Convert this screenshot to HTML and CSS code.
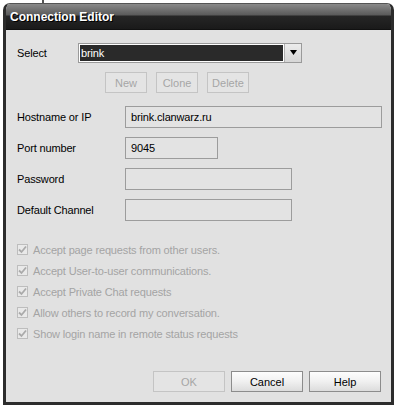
FILE: index.html
```html
<!DOCTYPE html>
<html>
<head>
    <meta charset="utf-8">
    <title>Connection Editor</title>
    <link rel="stylesheet" href="styles.css">
</head>
<body>
    <div class="backdrop-line"></div>
    <div class="window">
        <div class="titlebar">Connection Editor</div>
        <div class="content">
            <div class="select-row">
                <span class="label select-label">Select</span>
                <div class="combo">
                    <span class="combo-value"><span class="combo-sel">brink</span></span>
                    <span class="combo-btn">
                        <svg width="9" height="6" viewBox="0 0 9 6"><path d="M1 0h7L4.5 5z" fill="#000"/></svg>
                    </span>
                </div>
            </div>
            <div class="actions">
                <button class="btn disabled">New</button>
                <button class="btn disabled">Clone</button>
                <button class="btn disabled">Delete</button>
            </div>
            <div class="fields">
                <span class="label">Hostname or IP</span>
                <div class="field wide">brink.clanwarz.ru</div>
                <span class="label">Port number</span>
                <div class="field short">9045</div>
                <span class="label">Password</span>
                <div class="field medium"></div>
                <span class="label">Default Channel</span>
                <div class="field medium"></div>
            </div>
            <div class="checks">
                <div class="check"><span class="box"><svg width="9" height="9" viewBox="0 0 9 9"><path d="M1 4.5l2.5 2.5L8 1.5" fill="none" stroke="#aaa" stroke-width="1.8"/></svg></span>Accept page requests from other users.</div>
                <div class="check"><span class="box"><svg width="9" height="9" viewBox="0 0 9 9"><path d="M1 4.5l2.5 2.5L8 1.5" fill="none" stroke="#aaa" stroke-width="1.8"/></svg></span>Accept User-to-user communications.</div>
                <div class="check"><span class="box"><svg width="9" height="9" viewBox="0 0 9 9"><path d="M1 4.5l2.5 2.5L8 1.5" fill="none" stroke="#aaa" stroke-width="1.8"/></svg></span>Accept Private Chat requests</div>
                <div class="check"><span class="box"><svg width="9" height="9" viewBox="0 0 9 9"><path d="M1 4.5l2.5 2.5L8 1.5" fill="none" stroke="#aaa" stroke-width="1.8"/></svg></span>Allow others to record my conversation.</div>
                <div class="check"><span class="box"><svg width="9" height="9" viewBox="0 0 9 9"><path d="M1 4.5l2.5 2.5L8 1.5" fill="none" stroke="#aaa" stroke-width="1.8"/></svg></span>Show login name in remote status requests</div>
            </div>
            <div class="footer">
                <button class="btn big disabled">OK</button>
                <button class="btn big">Cancel</button>
                <button class="btn big">Help</button>
            </div>
        </div>
    </div>
</body>
</html>
```

FILE: styles.css
```css
body {
    margin: 0;
    background: #fff;
    font-family: "Liberation Sans", Arial, sans-serif;
    font-size: 11px;
    letter-spacing: -0.15px;
    color: #000;
    position: relative;
    height: 408px;
    overflow: hidden;
}
.backdrop-line {
    position: absolute;
    left: 42px;
    top: 0;
    width: 2px;
    height: 4px;
    background: #555;
}
.window {
    box-sizing: border-box;
    width: 391px;
    height: 402px;
    margin: 3px 0 0 3px;
    border: 3px solid #2c2c2c;
    border-top: 1px solid #555;
    border-radius: 7px 7px 0 0;
    background: #e1e1e1;
    display: flex;
    flex-direction: column;
    overflow: hidden;
}
.titlebar {
    height: 26px;
    flex: none;
    box-sizing: border-box;
    padding: 6px 0 0 4px;
    background: linear-gradient(#8a8a8a 0, #5a5a5a 11px, #262626 12px, #1a1a1a 100%);
    color: #fff;
    font-weight: bold;
    font-size: 12px;
    letter-spacing: 0;
    text-shadow: 1px 1px 0 #000;
    border-bottom: 1px solid #111;
}
.content {
    flex: 1;
    display: flex;
    flex-direction: column;
    padding: 13px 10px 10px 11px;
}
.label {
    line-height: 22px;
}
.select-row {
    display: flex;
    align-items: center;
    height: 20px;
}
.select-label {
    width: 61px;
}
.combo {
    width: 224px;
    height: 20px;
    box-sizing: border-box;
    border: 1px solid #9a9a9a;
    display: flex;
    background: #fff;
}
.combo-value {
    flex: 1;
    margin: 1px;
    background: #2a2a2a;
    color: #fff;
    line-height: 16px;
    padding-left: 1px;
}
.combo-btn {
    width: 16px;
    border-left: 1px solid #b0b0b0;
    background: linear-gradient(#ececec, #d6d6d6);
    display: flex;
    align-items: center;
    justify-content: center;
}
.actions {
    display: flex;
    gap: 9px;
    margin: 9px 0 0 88px;
}
.btn {
    font: inherit;
    height: 21px;
    width: 42px;
    padding: 0;
    box-sizing: border-box;
    border: 1px solid #8c8c8c;
    background: linear-gradient(#fdfdfd, #f0f0f0 50%, #dcdcdc);
    color: #000;
}
.btn.disabled {
    border-color: #c4c4c4;
    background: #e4e4e4;
    color: #a6a6a6;
}
.fields {
    display: grid;
    grid-template-columns: 108px auto;
    justify-items: start;
    row-gap: 9px;
    margin-top: 13px;
}
.field {
    height: 22px;
    box-sizing: border-box;
    border: 1px solid #9c9c9c;
    background: #e3e3e3;
    padding: 2px 5px;
    line-height: 16px;
}
.field.wide {
    width: 257px;
}
.field.short {
    width: 93px;
}
.field.medium {
    width: 167px;
}
.checks {
    margin-top: 22px;
    display: flex;
    flex-direction: column;
    gap: 8px;
    color: #a4a4a4;
}
.check {
    display: flex;
    align-items: center;
    height: 13px;
}
.box {
    width: 11px;
    height: 11px;
    box-sizing: border-box;
    border: 1px solid #bdbdbd;
    background: #e9e9e9;
    margin-right: 5px;
    display: flex;
    align-items: center;
    justify-content: center;
}
.footer {
    margin-top: auto;
    display: flex;
    justify-content: flex-end;
    gap: 6px;
}
.btn.big {
    width: 72px;
}
```
